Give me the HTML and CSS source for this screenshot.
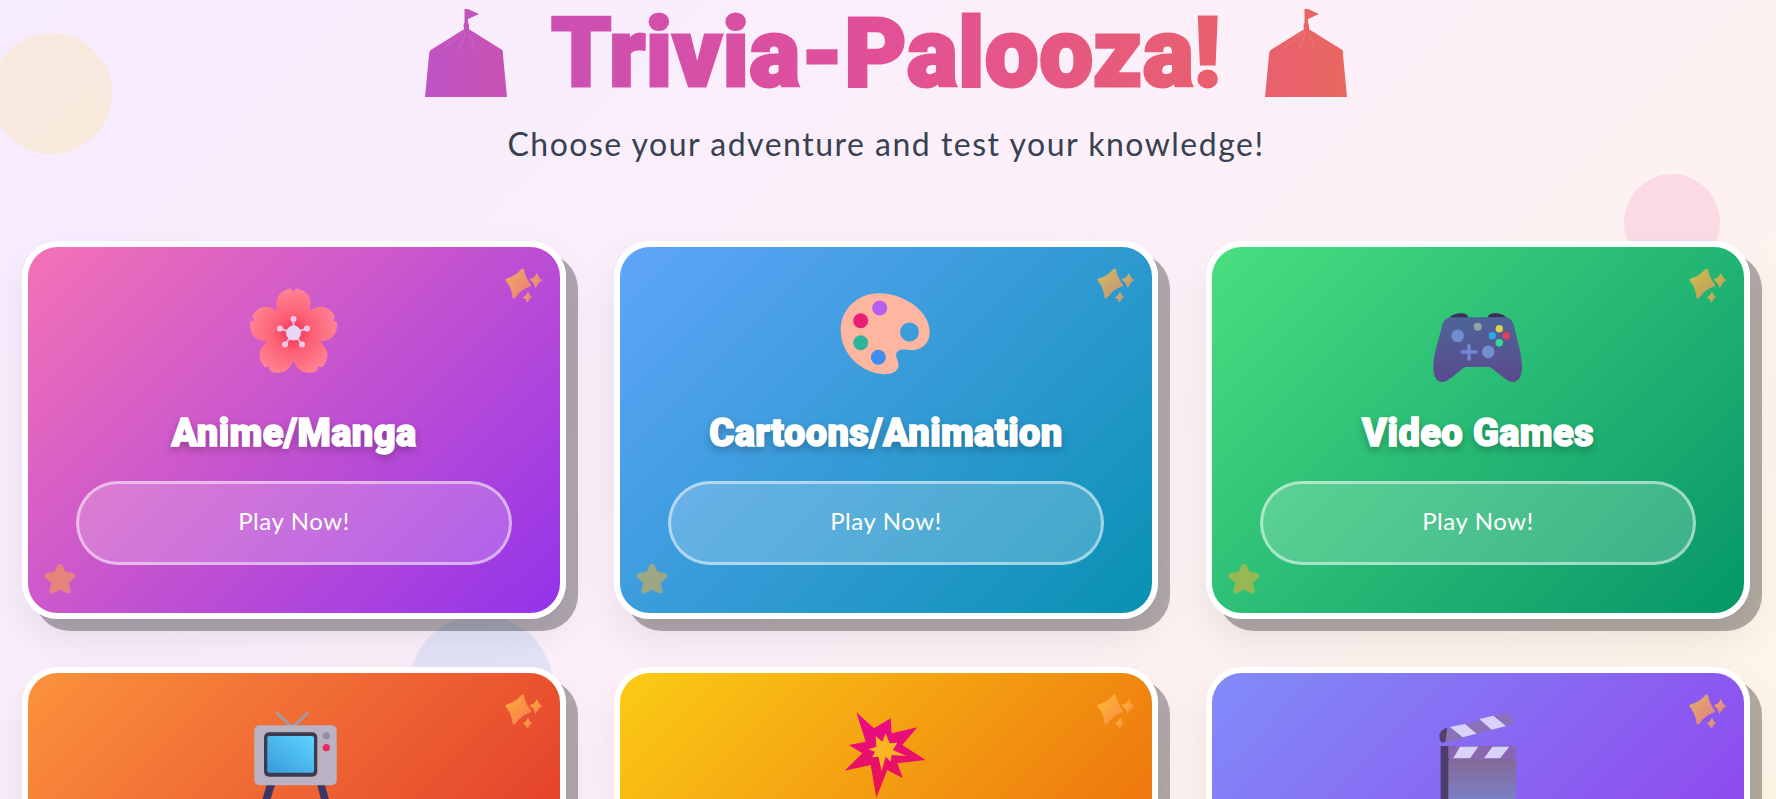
FILE: index.html
```html
<!DOCTYPE html>
<html lang="en">
<head>
    <meta charset="UTF-8">
    <meta name="viewport" content="width=device-width, initial-scale=1.0">
    <title>Trivia-Palooza!</title>
    <link rel="stylesheet" href="styles.css">
</head>
<body>
<svg class="defs" aria-hidden="true">
    <defs>
        <linearGradient id="tentLeft" x1="0" y1="0" x2="1" y2="0">
            <stop offset="0" stop-color="#bf54c4"/>
            <stop offset="1" stop-color="#c852b4"/>
        </linearGradient>
        <linearGradient id="tentRight" x1="0" y1="0" x2="1" y2="0">
            <stop offset="0" stop-color="#e8606e"/>
            <stop offset="1" stop-color="#ea6760"/>
        </linearGradient>
        <linearGradient id="sparkleFill" x1="0" y1="0" x2="1" y2="1">
            <stop offset="0" stop-color="#ffc83d"/>
            <stop offset="1" stop-color="#ff8f5c"/>
        </linearGradient>
        <radialGradient id="petalFill" gradientUnits="userSpaceOnUse" cx="47.500" cy="48" r="45">
            <stop offset="0" stop-color="#ee2c4c"/>
            <stop offset=".4" stop-color="#fc5f74"/>
            <stop offset="1" stop-color="#ff8494"/>
        </radialGradient>
        <linearGradient id="padFill" x1="0" y1="0" x2="0" y2="1">
            <stop offset="0" stop-color="#4d6497"/>
            <stop offset="1" stop-color="#5b4a8e"/>
        </linearGradient>
        <linearGradient id="screenFill" x1="0" y1="1" x2="1" y2="0">
            <stop offset="0" stop-color="#379bdb"/>
            <stop offset="1" stop-color="#5fd4ff"/>
        </linearGradient>
        <linearGradient id="burstFill" x1="0" y1="0" x2="0" y2="1">
            <stop offset="0" stop-color="#e80a8c"/>
            <stop offset="1" stop-color="#e8154e"/>
        </linearGradient>
        <linearGradient id="boardFill" x1="0" y1="0" x2="0" y2="1">
            <stop offset="0" stop-color="#856895"/>
            <stop offset="1" stop-color="#7a82cc"/>
        </linearGradient>
        <symbol id="sparkles" viewBox="0 0 38 36">
            <path fill="url(#sparkleFill)" stroke="url(#sparkleFill)" stroke-width="3" stroke-linejoin="round" d="M17.500 2 Q19 10 24.500 17 Q15 20 9 29 Q8 19 2 12 Q12 9 17.500 2 Z"/>
            <path fill="url(#sparkleFill)" stroke="url(#sparkleFill)" stroke-width="1.200" stroke-linejoin="round" d="M32 6 Q32.500 10 36.500 12 Q33 14 30.500 19 Q30 14.500 25.500 11.500 Q30 10.500 32 6 Z"/>
            <path fill="url(#sparkleFill)" stroke="url(#sparkleFill)" stroke-width="1" stroke-linejoin="round" d="M23 24.500 Q23.500 27.500 26.500 29 Q24 30 22.500 34 Q21.500 30.500 18.500 29.500 Q22 28 23 24.500 Z"/>
        </symbol>
        <symbol id="star" viewBox="0 0 32 32">
            <path fill="#ffb02e" stroke="#ffb02e" stroke-width="6" stroke-linejoin="round" d="M16 4 L19.500 11.500 L28 13 L21.500 18.500 L23.500 27.500 L16 23 L8.500 27.500 L10.500 18.500 L4 13 L12.500 11.500 Z"/>
        </symbol>
        <symbol id="tentShape" viewBox="0 0 82 88">
            <path d="M39.500 0 H43 L54 5 L43 10 V13.700 Q44.500 15 44 20.300 L77.300 41 Q78.500 43 78 46 L82 88 H0 L4 46 Q3.800 43 5.700 41 L39 20.300 Q38 15 39.500 13.700 Z"/>
            <path fill="none" stroke="#fff" stroke-opacity=".22" stroke-width=".6" d="M39 22 L17 41 M41 24 L33 42 M44 24 L50 42"/>
        </symbol>
    </defs>
</svg>

<div class="blob blob-yellow"></div>
<div class="blob blob-pink"></div>
<div class="blob blob-blue"></div>

<div class="page">
    <header class="header">
        <div class="title-row">
            <svg class="tent tent-left"><use href="#tentShape"/></svg>
            <h1 class="title">Trivia-Palooza!</h1>
            <svg class="tent tent-right"><use href="#tentShape"/></svg>
        </div>
        <p class="subtitle">Choose your adventure and test your knowledge!</p>
    </header>

    <main class="grid">
        <section class="card card-anime">
            <svg class="sparkle"><use href="#sparkles"/></svg>
            <svg class="star"><use href="#star"/></svg>
            <svg class="icon" viewBox="0 0 96 96">
                <g fill="url(#petalFill)">
                    <path id="petal" d="M47.500 52 C42 44 29 31 30.500 17 C31 9 38 4.500 44.500 3.500 L47.500 6.500 L50.500 3.500 C57 4.500 64 9 64.500 17 C66 31 53 44 47.500 52 Z"/>
                    <use href="#petal" transform="rotate(72 47.500 48)"/>
                    <use href="#petal" transform="rotate(144 47.500 48)"/>
                    <use href="#petal" transform="rotate(216 47.500 48)"/>
                    <use href="#petal" transform="rotate(288 47.500 48)"/>
                </g>
                <g stroke="#e6bfe4" stroke-width="2">
                    <path d="M47.500 48 V34 M47.500 48 L61 43.500 M47.500 48 L56 59.500 M47.500 48 L39 59.500 M47.500 48 L34 43.500"/>
                </g>
                <g fill="#ecc8ea">
                    <circle cx="47.500" cy="34" r="3"/>
                    <circle cx="61" cy="43.500" r="3"/>
                    <circle cx="56" cy="59.500" r="3"/>
                    <circle cx="39" cy="59.500" r="3"/>
                    <circle cx="34" cy="43.500" r="3"/>
                </g>
                <circle cx="47.500" cy="48" r="7.500" fill="#e8d6f6"/>
            </svg>
            <h2 class="card-title">Anime/Manga</h2>
            <button class="play">Play Now!</button>
        </section>

        <section class="card card-cartoons">
            <svg class="sparkle"><use href="#sparkles"/></svg>
            <svg class="star"><use href="#star"/></svg>
            <svg class="icon" viewBox="0 0 96 96">
                <path fill="#ffb6a1" fill-rule="evenodd" d="M2.700 45 C2.700 24 20 8.300 41 8.300 C66 8.300 91.700 26 91.700 47 C91.700 60 82 65 74 65 C68 65 62 63 59 67 C56 71 61 75 60.500 81 C60 87 52 90 44 89 C22 87 2.700 68 2.700 45 Z M81 47 A9.500 9.500 0 1 0 62 47 A9.500 9.500 0 1 0 81 47 Z"/>
                <circle cx="41.700" cy="23" r="7.500" fill="#b560f0"/>
                <circle cx="22.700" cy="35.700" r="7.500" fill="#ea2076"/>
                <circle cx="22.700" cy="57.700" r="7.500" fill="#2fb39a"/>
                <circle cx="40.300" cy="72.300" r="7.500" fill="#3d8ef0"/>
            </svg>
            <h2 class="card-title">Cartoons/Animation</h2>
            <button class="play">Play Now!</button>
        </section>

        <section class="card card-games">
            <svg class="sparkle"><use href="#sparkles"/></svg>
            <svg class="star"><use href="#star"/></svg>
            <svg class="icon" viewBox="0 0 96 96">
                <path fill="#3a2f5c" d="M17 36 C20 30 26 28 32 28.300 C36 28.500 38 30 39 34 H57 C58 30 60 28.500 64 28.300 C70 28 76 30 79 36 Z"/>
                <path fill="url(#padFill)" d="M20 32.300 H76 C81 33 84 38 85 45 C88 57 92 70 92 82 C92 92 88 97 83 97 C77 97 70 89 60 82 H35 C25 89 18 97 12 97 C7 97 3.300 92 3.300 82 C3.300 70 8 57 11 45 C12 38 15 33 20 32.300 Z"/>
                <circle cx="27.700" cy="50.700" r="6.300" fill="#6f8fd0"/>
                <circle cx="58.300" cy="66.700" r="6.300" fill="#6f8fd0"/>
                <circle cx="47.700" cy="41.700" r="4" fill="#8ea3a6"/>
                <circle cx="69.300" cy="43.700" r="3.700" fill="#e0cb55"/>
                <circle cx="62.300" cy="50.700" r="3.700" fill="#2fa8e0"/>
                <circle cx="76.300" cy="50.700" r="3.700" fill="#e0405a"/>
                <circle cx="69.300" cy="57.700" r="3.700" fill="#35dc90"/>
                <path stroke="#7187d8" stroke-width="3.500" stroke-linecap="round" d="M39 60.500 V74 M32 67 H46"/>
            </svg>
            <h2 class="card-title">Video Games</h2>
            <button class="play">Play Now!</button>
        </section>

        <section class="card card-tv">
            <svg class="sparkle"><use href="#sparkles"/></svg>
            <svg class="star"><use href="#star"/></svg>
            <svg class="icon" viewBox="0 0 96 96">
                <path stroke="#a09ca6" stroke-width="3" stroke-linecap="round" d="M31.300 2.300 L44.700 15 M61.300 2.300 L48 15"/>
                <path fill="#3c3668" d="M20.700 74 H29 L22 96 H14 Z M71.300 74 H79 L85 96 H77 Z"/>
                <rect x="8.300" y="14.300" width="82.400" height="60" rx="5" fill="#b9b2c2"/>
                <rect x="18" y="21.300" width="53.300" height="44.400" rx="5" fill="#3d3a50"/>
                <rect x="21.300" y="25" width="46.700" height="36.700" rx="2" fill="url(#screenFill)"/>
                <circle cx="80.300" cy="24.700" r="3.600" fill="#94909e"/>
                <circle cx="80.300" cy="36.700" r="3.600" fill="#f0285f"/>
            </svg>
            <h2 class="card-title">TV Shows</h2>
            <button class="play">Play Now!</button>
        </section>

        <section class="card card-comics">
            <svg class="sparkle"><use href="#sparkles"/></svg>
            <svg class="star"><use href="#star"/></svg>
            <svg class="icon" viewBox="0 0 96 96">
                <g transform="translate(-19 -11) scale(.3333)">
                    <polygon fill="url(#burstFill)" points="112,37 165,85 215,55 218,100 295,82 250,135 320,180 235,190 252,235 205,210 172,293 155,195 77,212 130,160 90,135 140,125"/>
                    <polygon fill="#fbb424" points="200,100 212,130 235,128 222,150 262,168 218,165 215,185 200,170 188,212 178,170 160,172 168,155 148,148 172,140 170,108 190,125"/>
                </g>
            </svg>
            <h2 class="card-title">Comics</h2>
            <button class="play">Play Now!</button>
        </section>

        <section class="card card-movies">
            <svg class="sparkle"><use href="#sparkles"/></svg>
            <svg class="star"><use href="#star"/></svg>
            <svg class="icon" viewBox="0 0 96 96">
                <g transform="translate(-20 -21) scale(.3333)">
                    <path fill="#8c70b8" stroke="#8c70b8" stroke-width="6" stroke-linejoin="round" d="M92 128 L295 71 L309 98 L108 155 Z"/>
                    <path fill="#50406c" d="M88 135 Q92 118 112 113 L106 156 L94 158 Q88 150 88 135 Z"/>
                    <path fill="#d9d3fb" d="M120 111 L165 102 L200 131 L158 142 Z M208 87 L250 77 L288 108 L245 119 Z"/>
                    <path fill="#4b3c6c" d="M92 168 H118 V340 H104 Q92 340 92 328 Z"/>
                    <rect x="115" y="168" width="203" height="38" fill="#8a66b0"/>
                    <path fill="#d9d3fb" d="M150 170 H205 L180 205 H130 Z M247 170 H298 L270 205 H222 Z"/>
                    <rect x="115" y="206" width="203" height="134" rx="8" fill="url(#boardFill)"/>
                </g>
            </svg>
            <h2 class="card-title">Movies</h2>
            <button class="play">Play Now!</button>
        </section>
    </main>
</div>
</body>
</html>
```

FILE: styles.css
```css
* {
    margin: 0;
    padding: 0;
    box-sizing: border-box;
}

html {
    overflow: hidden;
}

body {
    position: relative;
    background: linear-gradient(135deg, #f6ecff, #fdf0f8, #fef6e0);
    font-family: "Lato", "Noto Sans", sans-serif;
}

.defs {
    position: absolute;
    width: 0;
    height: 0;
}

.blob {
    position: absolute;
    border-radius: 50%;
}

.blob-yellow {
    left: -9px;
    top: 33px;
    width: 121px;
    height: 121px;
    background: rgba(253, 224, 71, 0.18);
}

.blob-pink {
    left: 1624px;
    top: 174px;
    width: 96px;
    height: 96px;
    background: rgba(244, 114, 182, 0.18);
}

.blob-blue {
    left: 409px;
    top: 615px;
    width: 144px;
    height: 144px;
    background: rgba(96, 165, 250, 0.15);
}

.page {
    position: relative;
    padding: 0 26px 64px 22px;
}

.header {
    text-align: center;
    height: 241px;
    padding-top: 9px;
}

.title-row {
    display: flex;
    justify-content: center;
    align-items: center;
    gap: 44px;
}

.tent {
    width: 82px;
    height: 88px;
    flex: none;
}

.tent-left { fill: url(#tentLeft); }
.tent-right { fill: url(#tentRight); }

.title {
    font-family: "Roboto", sans-serif;
    font-weight: 900;
    font-size: 96px;
    line-height: 88px;
    letter-spacing: 0.4px;
    color: transparent;
    background: linear-gradient(90deg, #cc50b4, #e25096 50%, #e8606e);
    -webkit-background-clip: text;
    background-clip: text;
    -webkit-text-stroke: 3px transparent;
}

.subtitle {
    margin-top: 24px;
    font-size: 32px;
    line-height: 46px;
    letter-spacing: 1.5px;
    color: #374151;
}

.grid {
    display: grid;
    grid-template-columns: repeat(3, 1fr);
    gap: 48px;
}

.card {
    position: relative;
    height: 378px;
    padding: 38px 48px 48px;
    border: 6px solid #fff;
    border-radius: 36px;
    text-align: center;
    box-shadow: 12px 12px 0 rgba(0, 0, 0, 0.3), 0 20px 40px rgba(0, 0, 0, 0.08);
}

.card-anime { background: linear-gradient(135deg, #f472b6, #9333ea); }
.card-cartoons { background: linear-gradient(135deg, #60a5fa, #0891b2); }
.card-games { background: linear-gradient(135deg, #4ade80, #059669); }
.card-tv { background: linear-gradient(135deg, #fb923c, #dc2626); }
.card-comics { background: linear-gradient(135deg, #facc15, #ea580c); }
.card-movies { background: linear-gradient(135deg, #818cf8, #9333ea); }

.icon {
    display: block;
    width: 96px;
    height: 96px;
    margin: 0 auto;
    overflow: visible;
}

.sparkle {
    position: absolute;
    top: 21px;
    right: 17px;
    width: 38px;
    height: 36px;
    opacity: 0.75;
}

.star {
    position: absolute;
    left: 16px;
    bottom: 18px;
    width: 32px;
    height: 32px;
    opacity: 0.5;
}

.card-title {
    margin-top: 30px;
    font-family: "Roboto", sans-serif;
    font-weight: 900;
    font-size: 38px;
    line-height: 44px;
    letter-spacing: 0.4px;
    color: #fff;
    -webkit-text-stroke: 1.5px #fff;
    text-shadow: 0 4px 8px rgba(0, 0, 0, 0.3);
}

.play {
    display: block;
    width: 100%;
    height: 84px;
    margin-top: 26px;
    padding-bottom: 5px;
    background: rgba(255, 255, 255, 0.2);
    border: 3px solid rgba(255, 255, 255, 0.5);
    border-radius: 42px;
    font-family: "Lato", "Noto Sans", sans-serif;
    font-size: 24px;
    letter-spacing: 0.6px;
    color: #fff;
}
```
